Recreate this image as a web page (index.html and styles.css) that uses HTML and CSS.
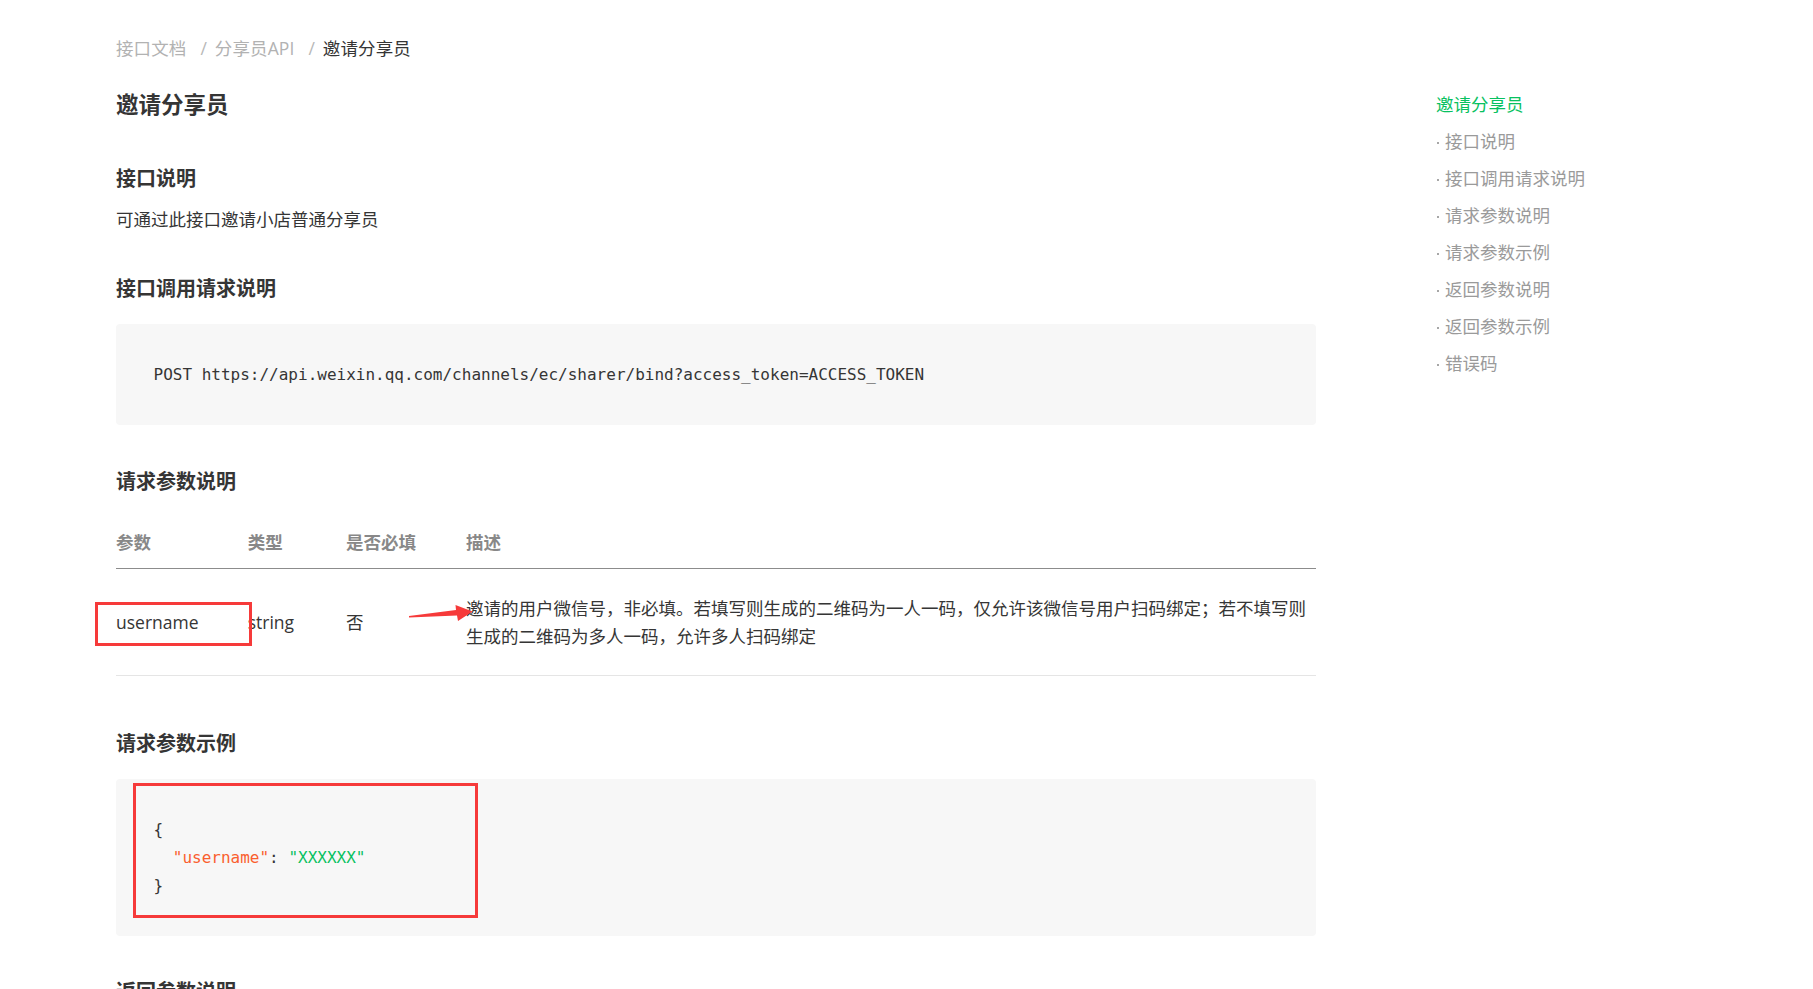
FILE: index.html
```html
<!DOCTYPE html>
<html lang="zh-CN">
<head>
<meta charset="utf-8">
<title>邀请分享员</title>
<link rel="stylesheet" href="styles.css">
</head>
<body>
<div class="layout">
  <main class="doc">
    <nav class="crumbs">
      <span class="crumb">接口文档</span><span class="sep">/</span><span class="crumb">分享员API</span><span class="sep">/</span><span class="crumb current">邀请分享员</span>
    </nav>
    <h1 class="title">邀请分享员</h1>

    <section class="sec sec-first">
      <h3 class="sec-title">接口说明</h3>
      <p class="text">可通过此接口邀请小店普通分享员</p>
    </section>

    <section class="sec">
      <h3 class="sec-title">接口调用请求说明</h3>
      <pre class="code">POST https://api.weixin.qq.com/channels/ec/sharer/bind?access_token=ACCESS_TOKEN</pre>
    </section>

    <section class="sec sec-params">
      <h3 class="sec-title">请求参数说明</h3>
      <table class="params">
        <colgroup><col class="c1"><col class="c2"><col class="c3"><col class="c4"></colgroup>
        <thead>
          <tr><th>参数</th><th>类型</th><th>是否必填</th><th>描述</th></tr>
        </thead>
        <tbody>
          <tr>
            <td>username</td>
            <td>string</td>
            <td>否</td>
            <td>邀请的用户微信号，非必填。若填写则生成的二维码为一人一码，仅允许该微信号用户扫码绑定；若不填写则生成的二维码为多人一码，允许多人扫码绑定</td>
          </tr>
        </tbody>
      </table>
    </section>

    <section class="sec sec-after-table">
      <h3 class="sec-title">请求参数示例</h3>
      <pre class="code"><span class="p">{</span>
  <span class="k">"username"</span><span class="p">:</span> <span class="s">"XXXXXX"</span>
<span class="p">}</span></pre>
    </section>

    <section class="sec">
      <h3 class="sec-title">返回参数说明</h3>
      <p class="text">返回参数</p>
    </section>
  </main>

  <aside class="toc">
    <a class="toc-item active">邀请分享员</a>
    <a class="toc-item"><span class="dot"></span>接口说明</a>
    <a class="toc-item"><span class="dot"></span>接口调用请求说明</a>
    <a class="toc-item"><span class="dot"></span>请求参数说明</a>
    <a class="toc-item"><span class="dot"></span>请求参数示例</a>
    <a class="toc-item"><span class="dot"></span>返回参数说明</a>
    <a class="toc-item"><span class="dot"></span>返回参数示例</a>
    <a class="toc-item"><span class="dot"></span>错误码</a>
  </aside>
</div>

<div class="mark mark-param"></div>
<div class="mark mark-example"></div>
<svg class="arrow" viewBox="400 600 80 25" width="80" height="25" aria-hidden="true">
  <polygon points="409,616 456,610 455.5,605 472.5,611.5 458,621 457,615.6 409,617.6" fill="#f63a3a"/>
</svg>
</body>
</html>
```

FILE: styles.css
```css
html {
  scrollbar-width: none;
}
body {
  margin: 0;
  background: #ffffff;
  color: #353535;
  font-family: "Open Sans", "Noto Sans CJK SC", sans-serif;
  position: relative;
}

.layout {
  display: flex;
  align-items: flex-start;
  padding-left: 116px;
}

.doc {
  width: 1200px;
  display: flex;
  flex-direction: column;
  padding-top: 36px;
}

/* breadcrumb */
.crumbs {
  font-size: 17.5px;
  line-height: 24px;
  color: #b2b2b2;
  white-space: nowrap;
}
.crumb {
  letter-spacing: 0.1px;
}
.crumb.current {
  color: #353535;
}
.sep {
  margin: 0 8px 0 14px;
  color: #b8b8b8;
}

.title {
  margin: 29px 0 0;
  font-size: 22.5px;
  line-height: 32px;
  font-weight: 700;
  color: #353535;
}

.sec {
  display: flex;
  flex-direction: column;
  margin-top: 42px;
}
.sec-first {
  margin-top: 44px;
}
.sec-params {
  margin-top: 43px;
}
.sec-after-table {
  margin-top: 54px;
}

.sec-title {
  margin: 0;
  font-size: 20px;
  line-height: 28px;
  font-weight: 700;
  color: #353535;
}

.text {
  margin: 12px 0 0;
  font-size: 17.5px;
  line-height: 28px;
}

.code {
  margin: 21px 0 0;
  padding: 36.5px 37.5px;
  background: #f7f7f7;
  border-radius: 4px;
  font-family: "DejaVu Sans Mono", monospace;
  font-size: 16px;
  line-height: 28px;
  color: #353535;
  white-space: pre;
}
.code .k { color: #fa5f2f; }
.code .s { color: #07c160; }
.code .p { color: #353535; }

/* params table */
.params {
  margin-top: 21px;
  width: 1200px;
  border-collapse: collapse;
  table-layout: fixed;
  font-size: 17.5px;
  line-height: 28px;
}
.params .c1 { width: 131.7px; }
.params .c2 { width: 98.3px; }
.params .c3 { width: 120px; }
.params .c4 { width: 850px; }
.params th {
  padding: 11px 0 12px;
  text-align: left;
  font-weight: 700;
  color: #888888;
  border-bottom: 1px solid #8c8c8c;
}
.params td {
  padding: 25px 0;
  vertical-align: middle;
  color: #353535;
  border-bottom: 1px solid #e5e5e5;
}

/* table of contents */
.toc {
  margin-left: 120px;
  padding-top: 86px;
  display: flex;
  flex-direction: column;
  font-size: 17.5px;
  line-height: 37px;
}
.toc-item {
  color: #9a9a9a;
  display: flex;
  align-items: center;
  white-space: nowrap;
}
.toc-item.active {
  color: #07c160;
}
.dot {
  width: 2px;
  height: 2px;
  border-radius: 50%;
  background: #8a8a8a;
  margin: 0 6px 0 1px;
  position: relative;
  top: 1px;
}

/* annotations drawn over the page */
.mark {
  position: absolute;
  box-sizing: border-box;
  border: 3px solid #f63a3a;
}
.mark-param {
  left: 95px;
  top: 602px;
  width: 157px;
  height: 44px;
}
.mark-example {
  left: 133px;
  top: 783px;
  width: 345px;
  height: 135px;
}
.arrow {
  position: absolute;
  left: 400px;
  top: 600px;
}
```
